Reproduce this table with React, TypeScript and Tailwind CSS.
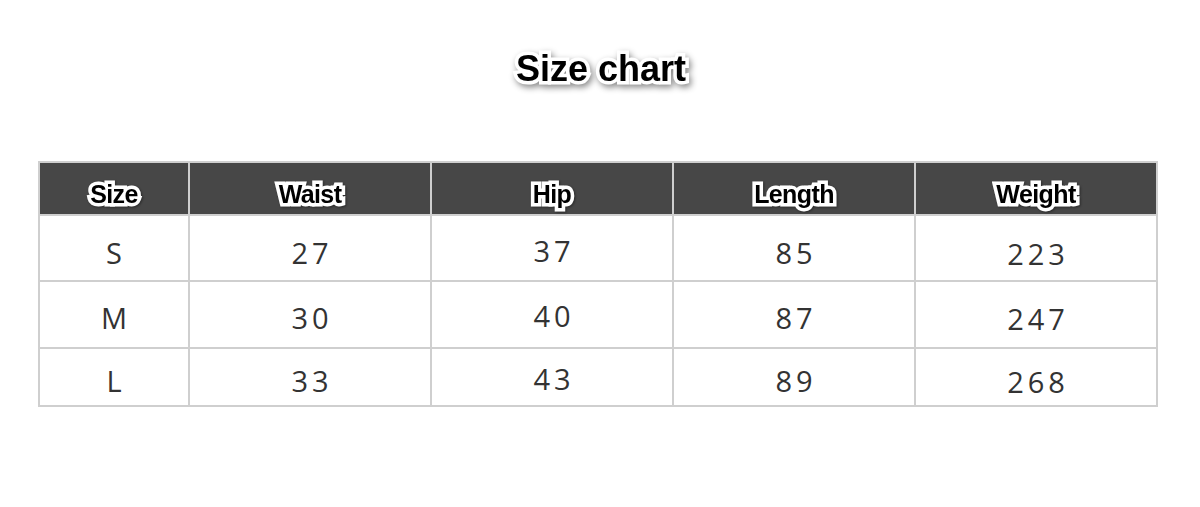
import React from 'react';

const headers = ['Size', 'Waist', 'Hip', 'Length', 'Weight'];

const rows: { cells: string[]; height: string; shift: string }[] = [
  { cells: ['S', '27', '37', '85', '223'], height: 'h-[66px]', shift: '' },
  { cells: ['M', '30', '40', '87', '247'], height: 'h-[67px]', shift: '-mt-[4px]' },
  { cells: ['L', '33', '43', '89', '268'], height: 'h-[58px]', shift: '-mt-[3px]' },
];

// Hip column text sits a touch higher than the rest in the chart
const offsets = ['pt-[10px]', 'pt-[10px]', 'pt-[6px]', 'pt-[10px]', 'pt-[12px]'];

export default function App() {
  return (
    <div className="w-[1200px] h-[507px] bg-white flex flex-col">
      {/* Title */}
      <div className="flex justify-center pt-[47px] pl-[2px]">
        <h1
          className="text-[36px] leading-[44px] font-bold text-black [-webkit-text-stroke:7px_white] [paint-order:stroke_fill] [filter:drop-shadow(2px_3px_3px_rgba(0,0,0,0.45))]"
          style={{ fontFamily: '"Liberation Sans", Arial, sans-serif' }}
        >
          Size chart
        </h1>
      </div>

      {/* Table */}
      <div className="pl-[38px] pt-[70px]">
        <table className="w-[1118px] border-collapse table-fixed border-2 border-[#cfcfcf]">
          <colgroup>
            <col className="w-[150px]" />
            <col className="w-[242px]" />
            <col className="w-[242px]" />
            <col className="w-[242px]" />
            <col className="w-[242px]" />
          </colgroup>
          <thead>
            <tr className="h-[53px] bg-[#474747]">
              {headers.map((h) => (
                <th
                  key={h}
                  className="border-2 border-[#cfcfcf] p-0 pt-[12px] text-center align-middle"
                >
                  <span
                    className="text-[25px] font-bold tracking-[-0.6px] text-black [-webkit-text-stroke:7px_white] [paint-order:stroke_fill] [filter:drop-shadow(1px_1px_1px_rgba(0,0,0,0.4))]"
                    style={{ fontFamily: '"Liberation Sans", Arial, sans-serif' }}
                  >
                    {h}
                  </span>
                </th>
              ))}
            </tr>
          </thead>
          <tbody>
            {rows.map((r) => (
              <tr key={r.cells[0]} className={r.height}>
                {r.cells.map((c, i) => (
                  <td
                    key={i}
                    className={`border-2 border-[#cfcfcf] p-0 text-center align-middle ${offsets[i]}`}
                  >
                    <div
                      className={`text-[29px] tracking-[4px] text-[#333333] pl-[4px] ${r.shift}`}
                      style={{ fontFamily: '"Open Sans", "Noto Sans", sans-serif' }}
                    >
                      {c}
                    </div>
                  </td>
                ))}
              </tr>
            ))}
          </tbody>
        </table>
      </div>
    </div>
  );
}
